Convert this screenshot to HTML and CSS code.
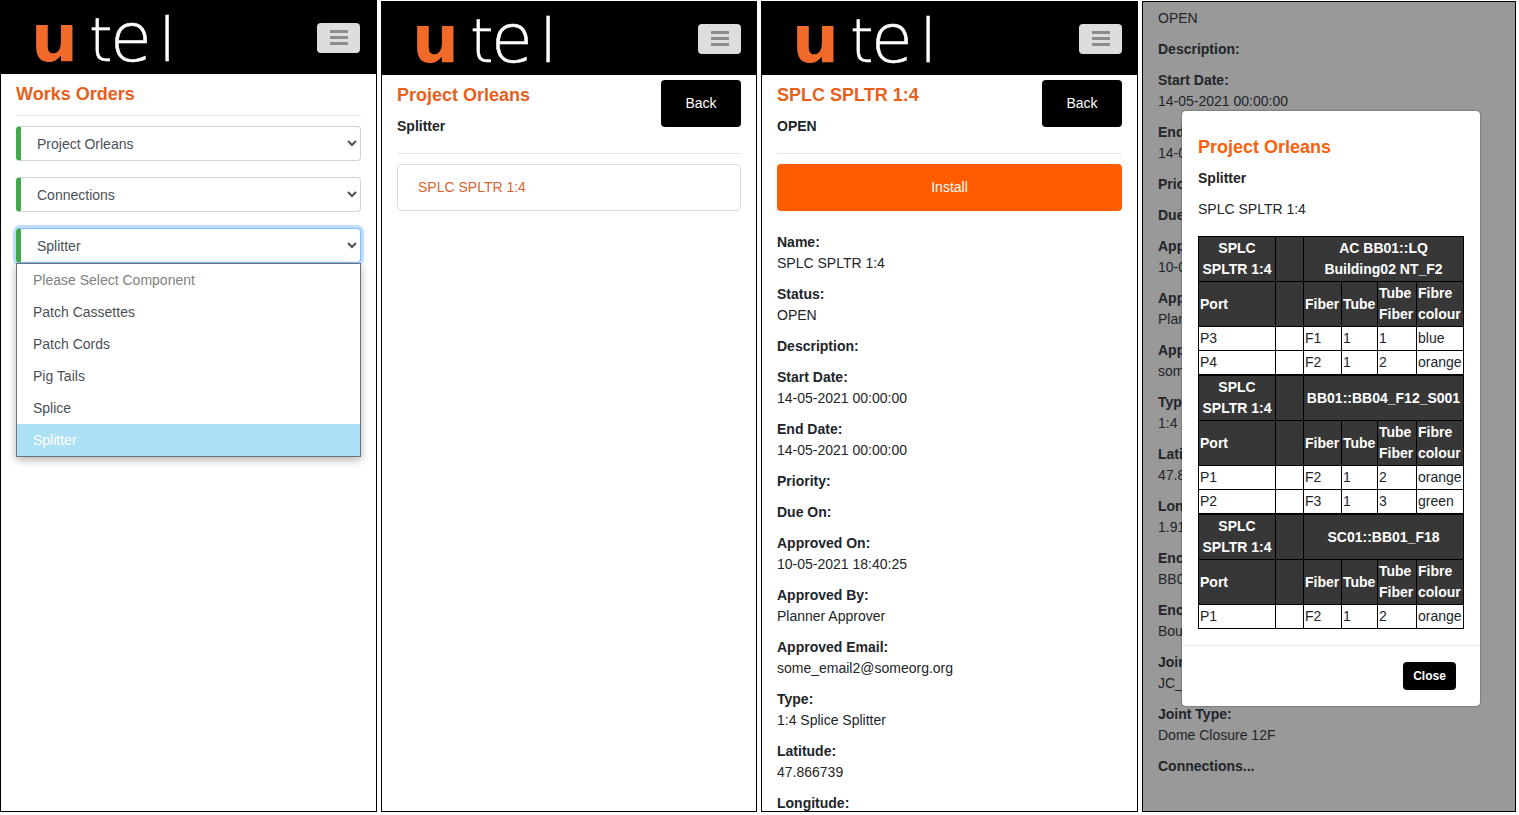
FILE: index.html
```html
<!DOCTYPE html>
<html lang="en">
<head>
	<meta charset="UTF-8">
	<title>utel - Works Orders</title>
	<link rel="stylesheet" href="styles.css">
</head>
<body>
<div class="screens">
	<section class="screen">
		<header class="topbar">
			<svg class="logo" width="144" height="56" viewBox="0 0 144 56" role="img" aria-label="utel">
				<text class="logo-u" x="2" y="51">u</text>
				<text class="logo-tel" x="60" y="51">t</text>
				<text class="logo-tel logo-e" x="81" y="51">e</text>
				<text class="logo-tel" x="130" y="51">l</text>
			</svg>
			<button class="menu" type="button" aria-label="Menu"><i></i><i></i><i></i></button>
		</header>
		<div class="content">
			<h1>Works Orders</h1>
			<hr>
			<form class="filters">
				<select aria-label="Project">
					<option>Project Orleans</option>
				</select>
				<select aria-label="Category">
					<option>Connections</option>
				</select>
				<div class="dropdown">
					<select class="open" aria-label="Component">
						<option>Splitter</option>
					</select>
					<ul class="options" role="listbox" aria-label="Component">
						<li class="placeholder" role="option">Please Select Component</li>
						<li role="option">Patch Cassettes</li>
						<li role="option">Patch Cords</li>
						<li role="option">Pig Tails</li>
						<li role="option">Splice</li>
						<li class="selected" role="option" aria-selected="true">Splitter</li>
					</ul>
				</div>
			</form>
		</div>
	</section>

	<section class="screen lower">
		<header class="topbar">
			<svg class="logo" width="144" height="56" viewBox="0 0 144 56" role="img" aria-label="utel">
				<text class="logo-u" x="2" y="51">u</text>
				<text class="logo-tel" x="60" y="51">t</text>
				<text class="logo-tel logo-e" x="81" y="51">e</text>
				<text class="logo-tel" x="130" y="51">l</text>
			</svg>
			<button class="menu" type="button" aria-label="Menu"><i></i><i></i><i></i></button>
		</header>
		<div class="content">
			<div class="title">
				<div>
					<h1>Project Orleans</h1>
					<h2>Splitter</h2>
				</div>
				<button class="back" type="button">Back</button>
			</div>
			<hr>
			<a class="item" href="#">SPLC SPLTR 1:4</a>
		</div>
	</section>

	<section class="screen lower">
		<header class="topbar">
			<svg class="logo" width="144" height="56" viewBox="0 0 144 56" role="img" aria-label="utel">
				<text class="logo-u" x="2" y="51">u</text>
				<text class="logo-tel" x="60" y="51">t</text>
				<text class="logo-tel logo-e" x="81" y="51">e</text>
				<text class="logo-tel" x="130" y="51">l</text>
			</svg>
			<button class="menu" type="button" aria-label="Menu"><i></i><i></i><i></i></button>
		</header>
		<div class="content">
			<div class="title">
				<div>
					<h1>SPLC SPLTR 1:4</h1>
					<h2>OPEN</h2>
				</div>
				<button class="back" type="button">Back</button>
			</div>
			<hr>
			<button class="install" type="button">Install</button>
			<dl class="details">
				<dt>Name:</dt>
				<dd>SPLC SPLTR 1:4</dd>
				<dt>Status:</dt>
				<dd>OPEN</dd>
				<dt>Description:</dt>
				<dt>Start Date:</dt>
				<dd>14-05-2021 00:00:00</dd>
				<dt>End Date:</dt>
				<dd>14-05-2021 00:00:00</dd>
				<dt>Priority:</dt>
				<dt>Due On:</dt>
				<dt>Approved On:</dt>
				<dd>10-05-2021 18:40:25</dd>
				<dt>Approved By:</dt>
				<dd>Planner Approver</dd>
				<dt>Approved Email:</dt>
				<dd>some_email2@someorg.org</dd>
				<dt>Type:</dt>
				<dd>1:4 Splice Splitter</dd>
				<dt>Latitude:</dt>
				<dd>47.866739</dd>
				<dt>Longitude:</dt>
			</dl>
		</div>
	</section>

	<section class="screen lower dimmed">
		<dl class="details">
			<dd>OPEN</dd>
			<dt>Description:</dt>
			<dt>Start Date:</dt>
			<dd>14-05-2021 00:00:00</dd>
			<dt>End Date:</dt>
			<dd>14-05-2021 00:00:00</dd>
			<dt>Priority:</dt>
			<dt>Due On:</dt>
			<dt>Approved On:</dt>
			<dd>10-05-2021 18:40:25</dd>
			<dt>Approved By:</dt>
			<dd>Planner Approver</dd>
			<dt>Approved Email:</dt>
			<dd>some_email2@someorg.org</dd>
			<dt>Type:</dt>
			<dd>1:4 Splice Splitter</dd>
			<dt>Latitude:</dt>
			<dd>47.866739</dd>
			<dt>Longitude:</dt>
			<dd>1.91</dd>
			<dt>Enclosure:</dt>
			<dd>BB01</dd>
			<dt>Enclosure Type:</dt>
			<dd>Boundary Box</dd>
			<dt>Joint:</dt>
			<dd>JC_01</dd>
			<dt>Joint Type:</dt>
			<dd>Dome Closure 12F</dd>
			<dt>Connections...</dt>
		</dl>
		<div class="modal" role="dialog" aria-label="Project Orleans">
			<div class="modal-body">
				<h1>Project Orleans</h1>
				<h2>Splitter</h2>
				<p>SPLC SPLTR 1:4</p>
				<table>
					<colgroup><col class="c-port"><col class="c-gap"><col class="c-fiber"><col class="c-tube"><col class="c-tf"><col></colgroup>
					<thead>
						<tr class="name"><th>SPLC SPLTR 1:4</th><th></th><th colspan="4">AC BB01::LQ Building02 NT_F2</th></tr>
						<tr><th>Port</th><th></th><th>Fiber</th><th>Tube</th><th>Tube Fiber</th><th>Fibre colour</th></tr>
					</thead>
					<tbody>
						<tr><td>P3</td><td></td><td>F1</td><td>1</td><td>1</td><td>blue</td></tr>
						<tr><td>P4</td><td></td><td>F2</td><td>1</td><td>2</td><td>orange</td></tr>
					</tbody>
				</table>
				<table>
					<colgroup><col class="c-port"><col class="c-gap"><col class="c-fiber"><col class="c-tube"><col class="c-tf"><col></colgroup>
					<thead>
						<tr class="name"><th>SPLC SPLTR 1:4</th><th></th><th colspan="4">BB01::BB04_F12_S001</th></tr>
						<tr><th>Port</th><th></th><th>Fiber</th><th>Tube</th><th>Tube Fiber</th><th>Fibre colour</th></tr>
					</thead>
					<tbody>
						<tr><td>P1</td><td></td><td>F2</td><td>1</td><td>2</td><td>orange</td></tr>
						<tr><td>P2</td><td></td><td>F3</td><td>1</td><td>3</td><td>green</td></tr>
					</tbody>
				</table>
				<table>
					<colgroup><col class="c-port"><col class="c-gap"><col class="c-fiber"><col class="c-tube"><col class="c-tf"><col></colgroup>
					<thead>
						<tr class="name"><th>SPLC SPLTR 1:4</th><th></th><th colspan="4">SC01::BB01_F18</th></tr>
						<tr><th>Port</th><th></th><th>Fiber</th><th>Tube</th><th>Tube Fiber</th><th>Fibre colour</th></tr>
					</thead>
					<tbody>
						<tr><td>P1</td><td></td><td>F2</td><td>1</td><td>2</td><td>orange</td></tr>
					</tbody>
				</table>
			</div>
			<div class="modal-footer">
				<button class="close" type="button">Close</button>
			</div>
		</div>
	</section>
</div>
</body>
</html>
```
FILE: styles.css
```css
*{
	box-sizing: border-box;
	margin: 0;
	padding: 0;
}
body,button,select{
	font-family: "Liberation Sans", Arial, sans-serif;
	font-size: 14px;
	line-height: 21px;
	color: #212529;
}
body{
	background: #fff;
}
.screens{
	display: grid;
	grid-template-columns: 377fr 376fr 377fr 374fr;
	gap: 4px;
	height: calc(100vh - 2px);
	padding-right: 3px;
}
.screen{
	position: relative;
	overflow: hidden;
	border: 1px solid #000;
	margin-bottom: 1px;
}
.lower{
	margin-top: 1px;
}
.topbar{
	display: flex;
	justify-content: space-between;
	align-items: center;
	height: 73px;
	padding: 0 16px 0 28px;
	background: #000;
}
.lower .topbar{
	padding-right: 15px;
}
.logo{
	overflow: visible;
}
.logo-u,.logo-tel{
	font-family: "DejaVu Sans", sans-serif;
	font-size: 60px;
}
.logo-u{
	font-size: 66px;
	font-weight: bold;
	fill: #f26a2a;
}
.logo-tel{
	font-weight: 200;
	fill: #fff;
	stroke: #fff;
	stroke-width: .5;
}
.logo-e{
	font-size: 68px;
}
.menu{
	display: flex;
	flex-direction: column;
	justify-content: center;
	align-items: center;
	gap: 3px;
	width: 43px;
	height: 30px;
	border: 0;
	border-radius: 4px;
	background: #ddd;
}
.menu i{
	width: 18px;
	height: 3px;
	background: #8c8c8c;
}
.content{
	padding: 5px 15px;
}
h1{
	font-size: 18px;
	line-height: 30px;
	color: #e8601c;
}
h2{
	font-size: 14px;
	line-height: 21px;
}
hr{
	border: 0;
	border-top: 1px solid #e8e8e8;
}
.content h1 + hr{
	margin: 6px 0 10px;
}
.filters{
	display: grid;
	gap: 16px;
}
select{
	display: block;
	width: 100%;
	height: 35px;
	padding: 0 0 0 12px;
	color: #495057;
	background: #fff;
	border: 1px solid #ced4da;
	border-left: 5px solid #43a94f;
	border-radius: 4px;
}
.open{
	border-color: #80bdff;
	border-left-color: #43a94f;
	box-shadow: 0 0 0 3px #bfdeff;
}
.dropdown{
	position: relative;
}
.options{
	position: absolute;
	top: 35px;
	left: 0;
	right: 0;
	list-style: none;
	color: #495057;
	background: #fff;
	border: 1px solid #6c757d;
	box-shadow: 0 3px 8px rgba(0, 0, 0, .3);
}
.options li{
	height: 32px;
	padding: 0 16px;
	line-height: 32px;
}
.options .placeholder{
	color: #808080;
}
.options .selected{
	color: #fff;
	background: #ace0f4;
}
.title{
	display: flex;
	justify-content: space-between;
	align-items: flex-start;
	height: 73px;
}
.title h2,.modal h2{
	margin-top: 6px;
}
.back,.install{
	height: 47px;
	border: 0;
	border-radius: 4px;
	color: #fff;
}
.back{
	width: 80px;
	background: #000;
}
.item,.install{
	display: block;
	width: 100%;
	margin-top: 10px;
}
.item{
	padding: 12px 20px;
	border: 1px solid #ddd;
	border-radius: 4px;
	color: #d9642e;
	text-decoration: none;
}
.install{
	background: #ff5c00;
}
.content .details{
	margin-top: 21px;
}
dt{
	font-weight: bold;
}
dd + dt,dt + dt{
	margin-top: 10px;
}
.dimmed{
	padding: 6px 15px;
	background: #999;
}
.modal{
	position: absolute;
	top: 109px;
	left: 39px;
	right: 35px;
	background: #fff;
	border-radius: 4px;
	box-shadow: 0 0 2px rgba(0, 0, 0, .6);
}
.modal-body{
	padding: 21px 16px 16px;
}
.modal h1{
	color: #f8600c;
}
.modal p{
	margin: 10px 0 16px;
}
table{
	width: 100%;
	table-layout: fixed;
	border-collapse: collapse;
}
th,td{
	padding: 1px;
	border: 1px solid #000;
	text-align: left;
}
th{
	color: #fff;
	background: #373737;
}
.name th{
	text-align: center;
}
.c-port{
	width: 77px;
}
.c-gap{
	width: 28px;
}
.c-fiber{
	width: 38px;
}
.c-tube{
	width: 36px;
}
.c-tf{
	width: 39px;
}
.modal-footer{
	display: flex;
	justify-content: flex-end;
	padding: 16px 24px;
	border-top: 1px solid #e9ecef;
}
.close{
	width: 53px;
	height: 28px;
	border: 0;
	border-radius: 4px;
	font-size: 12px;
	font-weight: bold;
	color: #fff;
	background: #000;
}
```
